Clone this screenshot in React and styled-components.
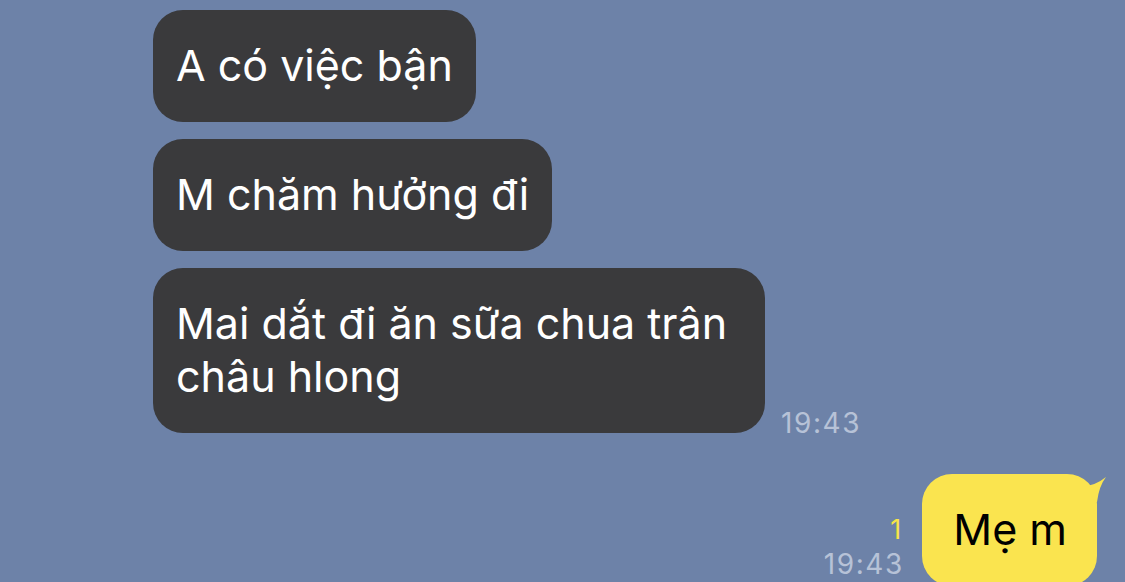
import React from 'react';
import styled, { createGlobalStyle } from 'styled-components';

const GlobalStyle = createGlobalStyle`
  html, body {
    margin: 0;
    padding: 0;
    height: 582px;
    overflow: hidden;
    background-color: #6d82a8;
    font-family: Inter, "Noto Sans", sans-serif;
  }
`;

const Chat = styled.main`
  display: flex;
  flex-direction: column;
  gap: 17px;
  padding: 10px 28px 0 153px;
  height: 582px;
  box-sizing: border-box;
  overflow: hidden;
`;

const Row = styled.div`
  display: flex;
  align-items: flex-end;
  justify-content: ${({ mine }) => (mine ? 'flex-end' : 'flex-start')};
  gap: ${({ mine }) => (mine ? '20px' : '16px')};
  margin-top: ${({ spaced }) => (spaced ? '24px' : '0')};
`;

const Bubble = styled.div`
  position: relative;
  max-width: 612px;
  box-sizing: border-box;
  padding: 29px ${({ mine }) => (mine ? '30px' : '23px')} 30px ${({ mine }) => (mine ? '31px' : '23px')};
  border-radius: 30px;
  background-color: ${({ mine }) => (mine ? '#fae44f' : '#3a3a3c')};
  color: ${({ mine }) => (mine ? '#000' : '#fff')};
  font-size: 43px;
  line-height: 53px;
`;

const Tail = styled.svg`
  position: absolute;
  top: 0;
  right: -12px;
  width: 30px;
  height: 30px;
`;

const Meta = styled.div`
  display: flex;
  flex-direction: column;
  align-items: flex-end;
  margin-bottom: ${({ mine }) => (mine ? '10px' : '-2px')};
`;

const Unread = styled.span`
  color: #f6e448;
  font-size: 27px;
  line-height: 28px;
  margin: 0 1px 8px 0;
`;

const Time = styled.span`
  color: #b7c2d7;
  font-size: 28px;
  line-height: 24px;
  letter-spacing: 1.6px;
  margin-right: -1.6px;
`;

const messages = [
  { text: 'A có việc bận' },
  { text: 'M chăm hưởng đi' },
  { text: 'Mai dắt đi ăn sữa chua trân châu hlong', time: '19:43' },
  { text: 'Mẹ m', mine: true, time: '19:43', unread: 1 },
];

export default function App() {
  return (
    <>
      <GlobalStyle />
      <Chat>
        {messages.map((m, i) => (
          <Row key={i} mine={m.mine} spaced={m.mine}>
            {m.mine && (
              <Meta mine>
                {m.unread && <Unread>{m.unread}</Unread>}
                <Time>{m.time}</Time>
              </Meta>
            )}
            <Bubble mine={m.mine}>
              {m.text}
              {m.mine && (
                <Tail viewBox="0 0 30 30">
                  <path d="M4 12 Q16 12 27 3 Q20 12 18 28 L4 28 Z" fill="#fae44f" />
                </Tail>
              )}
            </Bubble>
            {!m.mine && m.time && (
              <Meta>
                <Time>{m.time}</Time>
              </Meta>
            )}
          </Row>
        ))}
      </Chat>
    </>
  );
}
